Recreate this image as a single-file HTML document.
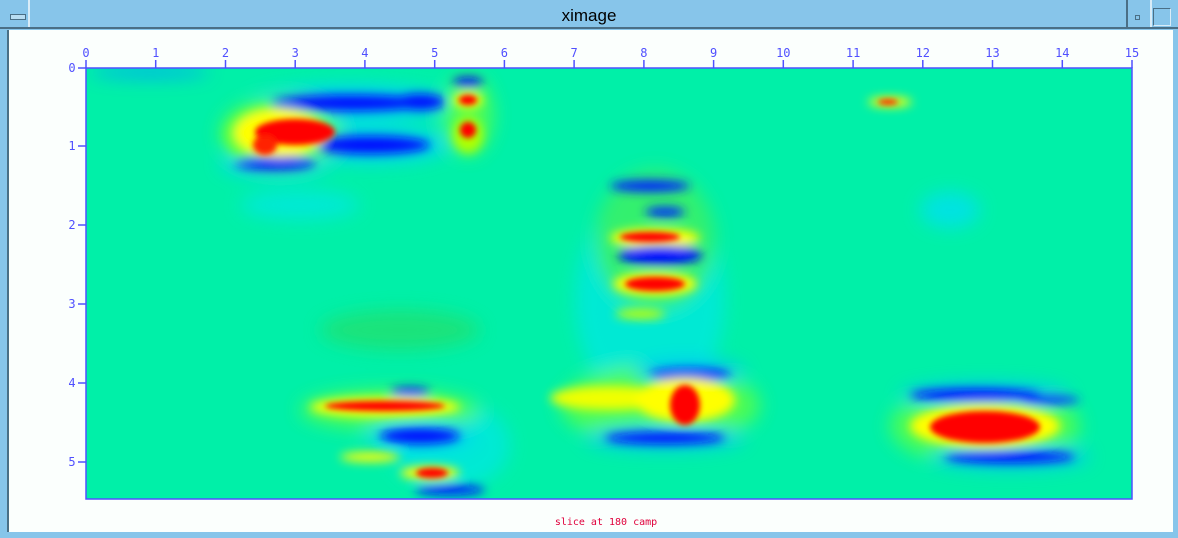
<!DOCTYPE html>
<html><head><style>
html,body{margin:0;padding:0;width:1178px;height:538px;overflow:hidden;background:#87c5ea;font-family:"DejaVu Sans Mono","Liberation Mono",monospace}
.title{position:absolute;left:0;top:0;width:1178px;height:29px;background:#87c5ea;border-bottom:2px solid #4a6f86;box-sizing:border-box}
.title span{position:absolute;left:0;right:0;top:6px;text-align:center;font:17px "Liberation Sans",sans-serif;color:#000}
.panel{position:absolute;left:7px;top:30px;width:1164px;height:502px;background:#fbfffd;border-left:2px solid #4a6f86}
</style></head><body>
<div class="title">
<div style="position:absolute;left:0;top:0;width:28px;height:27px;border-right:2px solid #d8ecf8"></div>
<div style="position:absolute;left:10px;top:14px;width:14px;height:4px;border:1px solid #4a6f86;background:#b8ddf2"></div>
<span>ximage</span>
<div style="position:absolute;left:1126px;top:0;width:22px;height:27px;border-left:2px solid #4a6f86;border-right:2px solid #d8ecf8"></div>
<div style="position:absolute;left:1135px;top:15px;width:3px;height:3px;border:1px solid #4a6f86"></div>
<div style="position:absolute;left:1153px;top:8px;width:16px;height:16px;border:1px solid #4a6f86;border-right-color:#d8ecf8;border-bottom-color:#d8ecf8"></div>
</div>
<div class="panel"></div>
<svg style="position:absolute;left:0;top:0" width="1178" height="538">
<defs>
<filter id="h" x="-50%" y="-50%" width="200%" height="200%"><feGaussianBlur stdDeviation="9"/></filter>
<filter id="b" x="-50%" y="-50%" width="200%" height="200%"><feGaussianBlur stdDeviation="5"/></filter>
<filter id="s" x="-50%" y="-50%" width="200%" height="200%"><feGaussianBlur stdDeviation="3"/></filter>
<clipPath id="c"><rect x="86" y="68" width="1046" height="431"/></clipPath>
</defs>
<rect x="86" y="68" width="1046" height="431" fill="#00f0a8"/>
<g clip-path="url(#c)">
<g filter="url(#h)" opacity="0.8">
<ellipse cx="300" cy="205" rx="60" ry="15" fill="#00e8e0"/>
<ellipse cx="650" cy="300" rx="75" ry="110" fill="#00e8e0"/>
<ellipse cx="450" cy="445" rx="60" ry="45" fill="#00e8e0"/>
<ellipse cx="950" cy="210" rx="30" ry="18" fill="#00e0f0"/>
<ellipse cx="400" cy="330" rx="80" ry="20" fill="#20e070"/>
<ellipse cx="150" cy="72" rx="60" ry="6" fill="#00a0ff"/>
<ellipse cx="350" cy="103" rx="100" ry="18" fill="#00d0ff"/>
<ellipse cx="370" cy="145" rx="80" ry="18" fill="#00d0ff"/>
<ellipse cx="275" cy="163" rx="55" ry="14" fill="#00d0ff"/>
<ellipse cx="280" cy="133" rx="60" ry="35" fill="#60ff40"/>
<ellipse cx="468" cy="115" rx="25" ry="40" fill="#60ff40"/>
<ellipse cx="655" cy="240" rx="60" ry="70" fill="#40f060"/>
<ellipse cx="660" cy="405" rx="100" ry="40" fill="#60ff40"/>
<ellipse cx="390" cy="410" rx="90" ry="20" fill="#60ff40"/>
<ellipse cx="420" cy="436" rx="55" ry="16" fill="#00d0ff"/>
<ellipse cx="985" cy="426" rx="95" ry="40" fill="#60ff40"/>
<ellipse cx="985" cy="395" rx="85" ry="12" fill="#00c0ff"/>
<ellipse cx="1010" cy="457" rx="80" ry="12" fill="#00c0ff"/>
<ellipse cx="665" cy="438" rx="80" ry="12" fill="#00c0ff"/>
<ellipse cx="690" cy="372" rx="55" ry="12" fill="#00c0ff"/>
</g>
<g filter="url(#b)">
<ellipse cx="270" cy="135" rx="45" ry="30" fill="#60ff40"/>
<ellipse cx="350" cy="103" rx="80" ry="8" fill="#0010ff"/>
<ellipse cx="420" cy="102" rx="25" ry="8" fill="#0010ff"/>
<ellipse cx="370" cy="145" rx="60" ry="9" fill="#0010ff"/>
<ellipse cx="275" cy="163" rx="40" ry="7" fill="#0010ff"/>
<ellipse cx="468" cy="82" rx="15" ry="5" fill="#0010ff"/>
<ellipse cx="280" cy="133" rx="45" ry="24" fill="#ffff00"/>
<ellipse cx="468" cy="100" rx="15" ry="8" fill="#ffff00"/>
<ellipse cx="468" cy="135" rx="15" ry="18" fill="#b0ff00"/>
<ellipse cx="890" cy="102" rx="22" ry="5" fill="#ffff00"/>
<ellipse cx="650" cy="186" rx="40" ry="6" fill="#0020ff"/>
<ellipse cx="665" cy="212" rx="20" ry="5" fill="#0020ff"/>
<ellipse cx="655" cy="238" rx="45" ry="10" fill="#ffff00"/>
<ellipse cx="660" cy="255" rx="42" ry="10" fill="#0010ff"/>
<ellipse cx="655" cy="284" rx="42" ry="12" fill="#ffff00"/>
<ellipse cx="640" cy="314" rx="25" ry="5" fill="#c0ff00"/>
<ellipse cx="690" cy="375" rx="40" ry="6" fill="#0010ff"/>
<ellipse cx="610" cy="398" rx="60" ry="12" fill="#f0ff00"/>
<ellipse cx="685" cy="400" rx="50" ry="22" fill="#ffff00"/>
<ellipse cx="665" cy="438" rx="60" ry="6" fill="#0010ff"/>
<ellipse cx="410" cy="392" rx="20" ry="5" fill="#0020ff"/>
<ellipse cx="385" cy="407" rx="75" ry="10" fill="#ffff00"/>
<ellipse cx="420" cy="436" rx="40" ry="8" fill="#0010ff"/>
<ellipse cx="370" cy="457" rx="30" ry="5" fill="#ffff00"/>
<ellipse cx="430" cy="473" rx="30" ry="7" fill="#ffff00"/>
<ellipse cx="450" cy="490" rx="35" ry="5" fill="#0010ff"/>
<ellipse cx="975" cy="395" rx="65" ry="6" fill="#0010ff"/>
<ellipse cx="985" cy="426" rx="75" ry="22" fill="#ffff00"/>
<ellipse cx="1010" cy="457" rx="65" ry="6" fill="#0010ff"/>
<ellipse cx="1050" cy="400" rx="30" ry="4" fill="#0030ff"/>
</g>
<g filter="url(#s)">
<ellipse cx="295" cy="132" rx="40" ry="13" fill="#ff0000"/>
<ellipse cx="265" cy="145" rx="12" ry="10" fill="#ff2000"/>
<ellipse cx="468" cy="100" rx="9" ry="5" fill="#ff0000"/>
<ellipse cx="468" cy="130" rx="8" ry="8" fill="#ff0000"/>
<ellipse cx="888" cy="102" rx="10" ry="3" fill="#ff3000"/>
<ellipse cx="650" cy="237" rx="30" ry="5" fill="#ff0000"/>
<ellipse cx="655" cy="284" rx="30" ry="7" fill="#ff0000"/>
<ellipse cx="685" cy="405" rx="15" ry="20" fill="#ff0000"/>
<ellipse cx="385" cy="406" rx="60" ry="5" fill="#ff0000"/>
<ellipse cx="432" cy="473" rx="16" ry="5" fill="#ff0000"/>
<ellipse cx="985" cy="427" rx="55" ry="16" fill="#ff0000"/>
</g>
</g>
<g stroke="#5050ff" stroke-width="1.5" fill="none">
<rect x="86" y="68" width="1046" height="431"/>
</g>
<g stroke="#5050ff" stroke-width="1.5">
<line x1="86" y1="60" x2="86" y2="68"/><line x1="155.7" y1="60" x2="155.7" y2="68"/><line x1="225.5" y1="60" x2="225.5" y2="68"/><line x1="295.2" y1="60" x2="295.2" y2="68"/><line x1="364.9" y1="60" x2="364.9" y2="68"/><line x1="434.7" y1="60" x2="434.7" y2="68"/><line x1="504.4" y1="60" x2="504.4" y2="68"/><line x1="574.1" y1="60" x2="574.1" y2="68"/><line x1="643.9" y1="60" x2="643.9" y2="68"/><line x1="713.6" y1="60" x2="713.6" y2="68"/><line x1="783.3" y1="60" x2="783.3" y2="68"/><line x1="853.1" y1="60" x2="853.1" y2="68"/><line x1="922.8" y1="60" x2="922.8" y2="68"/><line x1="992.5" y1="60" x2="992.5" y2="68"/><line x1="1062.3" y1="60" x2="1062.3" y2="68"/><line x1="1132" y1="60" x2="1132" y2="68"/>
<line x1="78" y1="68" x2="86" y2="68"/><line x1="78" y1="146" x2="86" y2="146"/><line x1="78" y1="225" x2="86" y2="225"/><line x1="78" y1="304" x2="86" y2="304"/><line x1="78" y1="383" x2="86" y2="383"/><line x1="78" y1="462" x2="86" y2="462"/>
</g>
<g fill="#5050ff" font-family="DejaVu Sans Mono, monospace" font-size="12" text-anchor="middle">
<text x="86" y="57">0</text><text x="155.7" y="57">1</text><text x="225.5" y="57">2</text><text x="295.2" y="57">3</text><text x="364.9" y="57">4</text><text x="434.7" y="57">5</text><text x="504.4" y="57">6</text><text x="574.1" y="57">7</text><text x="643.9" y="57">8</text><text x="713.6" y="57">9</text><text x="783.3" y="57">10</text><text x="853.1" y="57">11</text><text x="922.8" y="57">12</text><text x="992.5" y="57">13</text><text x="1062.3" y="57">14</text><text x="1132" y="57">15</text>
<text x="72" y="72">0</text><text x="72" y="150">1</text><text x="72" y="229">2</text><text x="72" y="308">3</text><text x="72" y="387">4</text><text x="72" y="466">5</text>
</g>
<text x="606" y="525" fill="#e0003c" font-family="DejaVu Sans Mono, monospace" font-size="10" text-anchor="middle">slice at 180 camp</text>
</svg>
</body></html>
